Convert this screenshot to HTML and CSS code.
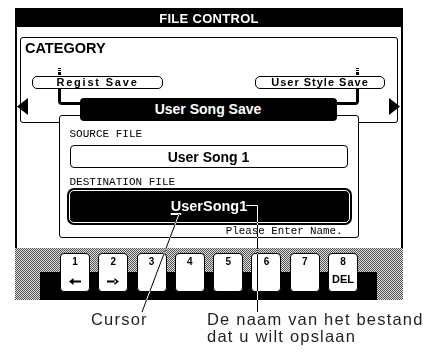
FILE: index.html
```html
<!DOCTYPE html>
<html lang="nl">
<head>
    <meta charset="UTF-8">
    <title>File Control</title>

    <link rel="stylesheet" href="styles.css">
</head>

<body>

    <div class="page">

        <div class="screen">

            <div class="titlebar">FILE CONTROL</div>

            <div class="main">

                <!-- categorie kader -->
                <div class="frame">
                    <div class="cat">CATEGORY</div>
                    <div class="tabs">
                        <div class="tabcol left">
                            <div class="mark"></div>
                            <div class="tab regist">Regist Save</div>
                            <div class="link"></div>
                        </div>
                        <div class="tabcol right">
                            <div class="mark"></div>
                            <div class="tab style">User Style Save</div>
                            <div class="link"></div>
                        </div>
                    </div>
                </div>

                <!-- dialoog met pijlen -->
                <div class="dlgrow">
                    <svg class="arrow" width="11" height="17" viewBox="0 0 11 17"><polygon points="11,0 0,8.5 11,17"/></svg>

                    <div class="dialog">
                        <div class="dlg-title">User Song Save</div>
                        <div class="dlg-body">
                            <div class="label">SOURCE FILE</div>
                            <div class="srcbox">User Song 1</div>
                            <div class="label dst">DESTINATION FILE</div>
                            <div class="dstbox">
                                <div class="dst-in"><span class="cur">U</span>serSong1</div>
                            </div>
                            <div class="hint">Please Enter Name.</div>
                        </div>
                    </div>

                    <svg class="arrow" width="11" height="17" viewBox="0 0 11 17"><polygon points="0,0 11,8.5 0,17"/></svg>
                </div>

            </div>

            <!-- toetsen -->
            <div class="band">
                <div class="bar">
                    <div class="key"><span>1</span><svg width="12" height="7" viewBox="0 0 12 7"><path d="M0 3.5L4.5 0V7Z M3 2.5H12V4.5H3Z"/></svg></div>
                    <div class="key"><span>2</span><svg width="12" height="7" viewBox="0 0 12 7"><path d="M12 3.5L7.5 0V7Z M0 2.5H9V4.5H0Z"/></svg></div>
                    <div class="key"><span>3</span></div>
                    <div class="key"><span>4</span></div>
                    <div class="key"><span>5</span></div>
                    <div class="key"><span>6</span></div>
                    <div class="key"><span>7</span></div>
                    <div class="key"><span>8</span><span class="del">DEL</span></div>
                </div>
            </div>

        </div>

        <div class="notes">
            <div class="note cursor-note">Cursor</div>
            <div class="note name-note">
                <div>De naam van het bestand</div>
                <div>dat u wilt opslaan</div>
            </div>
        </div>

        <!-- verwijslijnen -->
        <svg class="leaders" width="433" height="358" viewBox="0 0 433 358">
            <line x1="179" y1="214" x2="142" y2="312" stroke="#fff" stroke-width="1"/>
            <polyline points="246,205.5 257.5,205.5 257.5,312" fill="none" stroke="#fff" stroke-width="1"/>
        </svg>

    </div>

</body>
</html>
```

FILE: styles.css
```css
* {
    margin: 0px;
    padding: 0px;
    box-sizing: border-box;
}

body {
    background: #fff;
    font-family: "Liberation Sans", Arial, sans-serif;
}

.page {
    position: relative;
    width: 433px;
    height: 358px;
    padding: 8px 0 0 15px;
}

.screen {
    width: 388px;
}

.titlebar {
    height: 19px;
    padding-top: 2px;
    background: #000;
    color: #fff;
    text-align: center;
    font-weight: bold;
    font-size: 13px;
    line-height: 17px;
    letter-spacing: 0.3px;
}

.main {
    border-left: 2px solid #000;
    border-right: 2px solid #000;
    padding: 10px 0;
}

.frame {
    margin: 0 3px;
    height: 86px;
    border: 1px solid #000;
    border-radius: 3px;
    padding: 2px 0 0 4px;
}

.cat {
    font-weight: bold;
    font-size: 14.5px;
    line-height: 16px;
}

.tabs {
    display: flex;
    justify-content: space-between;
    margin: 12px 12px 0 7px;
}

.tabcol {
    display: flex;
    flex-direction: column;
}

.tabcol.left {
    align-items: flex-start;
}

.tabcol.right {
    align-items: flex-end;
}

.mark {
    width: 3px;
    height: 7px;
    background: linear-gradient(#000 0 1px, transparent 1px 2px, #000 2px 3px, transparent 3px 4px, #000 4px);
}

.left .mark {
    margin-left: 26px;
}

.right .mark {
    margin-right: 26px;
}

.tab {
    margin-top: 1px;
    width: 131px;
    height: 13px;
    border: 1px solid #000;
    border-radius: 5px;
    text-align: center;
    font-weight: bold;
    font-size: 11px;
    line-height: 11px;
    letter-spacing: 1px;
}

.tab.regist {
    letter-spacing: 1.8px;
}

.tab.style {
    width: 130px;
}

.link {
    width: 22px;
    height: 16px;
    border-bottom: 3px solid #000;
}

.left .link {
    margin-left: 26px;
    border-left: 3px solid #000;
    border-bottom-left-radius: 4px;
}

.right .link {
    margin-right: 26px;
    border-right: 3px solid #000;
    border-bottom-right-radius: 4px;
}

.dlgrow {
    display: flex;
    justify-content: space-between;
    align-items: flex-start;
    margin-top: -25px;
    padding-right: 1px;
}

.arrow {
    display: block;
}

.dialog {
    width: 300px;
}

.dlg-title {
    position: relative;
    z-index: 1;
    height: 23px;
    margin: 0 22px 0 21px;
    background: #000;
    color: #fff;
    border-radius: 4px;
    text-align: center;
    font-weight: bold;
    font-size: 14px;
    line-height: 23px;
}

.dlg-body {
    margin-top: -6px;
    height: 123px;
    border: 1px solid #000;
    border-radius: 3px;
    background: #fff;
    padding-top: 12px;
}

.label {
    margin-left: 10px;
    font-family: "Liberation Mono", monospace;
    font-size: 11px;
    line-height: 12px;
}

.label.dst {
    margin-top: 8px;
}

.srcbox {
    margin: 5px 10px 0;
    height: 23px;
    border: 1px solid #000;
    border-radius: 4px;
    text-align: center;
    font-weight: bold;
    font-size: 14px;
    line-height: 22px;
}

.dstbox {
    margin: 0 6px 0 7px;
    height: 37px;
    padding: 2px;
    background: #000;
    border-radius: 7px;
}

.dst-in {
    height: 100%;
    border: 1px solid #fff;
    border-radius: 5px;
    color: #fff;
    text-align: center;
    font-weight: bold;
    font-size: 14.5px;
    line-height: 31px;
}

.cur {
    text-decoration: underline;
    text-decoration-thickness: 2px;
    text-underline-offset: 2px;
}

.hint {
    margin-right: 15px;
    text-align: right;
    font-family: "Liberation Mono", monospace;
    font-size: 10.8px;
    line-height: 12px;
}

.band {
    height: 52px;
    background-color: #999;
    background-image: conic-gradient(#555 25%, #ddd 0 50%, #555 0 75%, #ddd 0);
    background-size: 2px 2px;
}

.bar {
    display: flex;
    gap: 8.3px;
    margin-left: 25px;
    width: 337px;
    height: 52px;
    padding: 5px 0 0 20px;
    background: linear-gradient(transparent 24px, #000 24px);
}

.key {
    width: 30px;
    height: 39px;
    background: #fff;
    border: 1px solid #000;
    border-radius: 4px;
    display: flex;
    flex-direction: column;
    align-items: center;
    justify-content: space-between;
    padding: 3px 0 6px;
    font-weight: bold;
    font-size: 10px;
    line-height: 10px;
}

.key .del {
    font-size: 11px;
    line-height: 11px;
}

.notes {
    display: flex;
    margin-top: 11px;
    font-size: 16.5px;
    line-height: 17px;
    letter-spacing: 1.2px;
    color: #231f20;
}

.cursor-note {
    width: 192px;
    padding-left: 76px;
}

.leaders {
    position: absolute;
    left: 0;
    top: 0;
    pointer-events: none;
    mix-blend-mode: difference;
}
```
